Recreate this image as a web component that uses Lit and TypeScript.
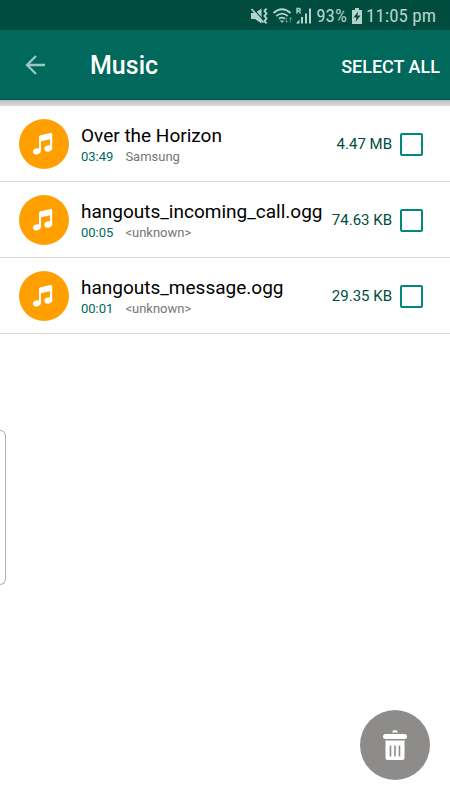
import { LitElement, html, css } from "lit";
import { customElement, property } from "lit/decorators.js";

interface Track {
  id: string;
  title: string;
  duration: string;
  artist: string;
  size: string;
}

const TRACKS: Track[] = [
  { id: "t1", title: "Over the Horizon", duration: "03:49", artist: "Samsung", size: "4.47 MB" },
  { id: "t2", title: "hangouts_incoming_call.ogg", duration: "00:05", artist: "<unknown>", size: "74.63 KB" },
  { id: "t3", title: "hangouts_message.ogg", duration: "00:01", artist: "<unknown>", size: "29.35 KB" },
];

@customElement("status-bar")
class StatusBar extends LitElement {
  static styles = css`
    :host {
      display: flex;
      align-items: center;
      justify-content: flex-end;
      height: 30px;
      padding: 2px 14px 0 0;
      box-sizing: border-box;
      background: #004d40;
      color: #b5d3cc;
      font: 19px/20px "Roboto Condensed", Roboto, sans-serif;
      white-space: nowrap;
    }
    svg {
      display: block;
      flex: none;
    }
    .level {
      margin: 0 5px 0 2px;
    }
    .time {
      margin-left: 4px;
    }
  `;

  render() {
    return html`
      <svg width="66" height="20" viewBox="0 0 66 20" fill="none" stroke="#b5d3cc">
        <path d="M3 7h4l6.500-4.500v15L7 13H3z" fill="#b5d3cc" stroke="none" />
        <path d="M5 2.500l11 12.500" stroke="#004d40" stroke-width="1.200" />
        <path d="M3.500 3l12 13.500" stroke-width="1.700" />
        <path d="M18.500 2.500l-2 2.500 2 2.500-2 2.500 2 2.500-2 2.500 2 2.500" stroke-width="1.900" />
        <path d="M25.500 7q8.500-7.500 17 0M28.300 10q5.700-4.800 11.400 0M31 12.800q3-2.400 6 0" stroke-width="1.800" />
        <path d="M32 14.500h4l-2 2.500z" fill="#b5d3cc" stroke="none" />
        <path d="M38.500 11.500v5m-1.500-1.700l1.500 1.700 1.500-1.700M42.500 16.500v-5m-1.500 1.700l1.500-1.700 1.500 1.700" stroke="#4f8b80" />
        <path d="M49 7.500v-5h2a1.200 1.200 0 0 1 0 2.500h-2m2 0l1.500 2.500" stroke-width="1.400" />
        <path d="M54 17.500v-6.500M58 17.500V7.500M62 17.500V2.500" stroke-width="2" />
        <path d="M48 17.500l3.500-4v4z" fill="#b5d3cc" stroke="none" />
      </svg>
      <span class="level">93%</span>
      <svg width="10" height="16" viewBox="0 0 10 16">
        <path d="M3 0h4v2h3v14H0V2h3z" fill="#b5d3cc" />
        <path d="M6 3.500L1.500 9.500h3L3.500 14l5-6.500H5.500z" fill="#004d40" />
      </svg>
      <span class="time">11:05 pm</span>
    `;
  }
}

@customElement("track-row")
class TrackRow extends LitElement {
  @property({ attribute: false }) track!: Track;

  static styles = css`
    :host {
      display: flex;
      align-items: center;
      box-sizing: border-box;
      min-height: 76px;
      padding: 1px 27px 0 19px;
      border-bottom: 1px solid #d6d6d6;
    }
    .cover {
      display: grid;
      place-items: center;
      flex: none;
      width: 50px;
      height: 50px;
      border-radius: 50%;
      background: #ffa000;
    }
    .text {
      flex: 1;
      min-width: 0;
      margin-left: 12px;
    }
    .title {
      display: block;
      padding-top: 2px;
      font-size: 19px;
      line-height: 24px;
      color: #000;
      white-space: nowrap;
    }
    .meta {
      display: flex;
      gap: 12px;
      font-size: 13px;
      line-height: 18px;
      color: #757575;
    }
    .duration {
      color: #00695c;
    }
    .size {
      margin-right: 8px;
      font-size: 15px;
      color: #004d40;
      white-space: nowrap;
    }
    .pick {
      appearance: none;
      flex: none;
      box-sizing: border-box;
      width: 23px;
      height: 23px;
      margin: 0;
      border: 2px solid #00897b;
      border-radius: 2px;
      background: #fff;
    }
    .pick:checked {
      background: #00897b;
    }
  `;

  render() {
    const { id, title, duration, artist, size } = this.track;
    return html`
      <span class="cover">
        <svg width="24" height="24" viewBox="0 0 24 24" fill="#fff">
          <path d="M7 5.300Q7 3.700 8.500 3.300L18.500 .9Q20.200 .7 20.200 2.300V16.500h-2.200V7.300L9 9.300V19H7z" />
          <ellipse cx="4.900" cy="19.300" rx="4" ry="3" transform="rotate(-14 4.900 19.300)" />
          <ellipse cx="16.300" cy="16.500" rx="4" ry="3" transform="rotate(-14 16.300 16.500)" />
        </svg>
      </span>
      <div class="text">
        <label class="title" for=${id}>${title}</label>
        <div class="meta"><span class="duration">${duration}</span><span>${artist}</span></div>
      </div>
      <span class="size">${size}</span>
      <input class="pick" type="checkbox" id=${id} />
    `;
  }
}

@customElement("app-root")
class AppRoot extends LitElement {
  static styles = css`
    :host {
      display: block;
      position: relative;
      min-height: 100vh;
      background: #fff;
      font-family: Roboto, sans-serif;
    }
    button {
      padding: 0;
      border: 0;
      background: none;
      font: inherit;
      color: inherit;
      cursor: pointer;
    }
    svg {
      display: block;
    }
    .bar {
      display: flex;
      align-items: center;
      box-sizing: border-box;
      height: 70px;
      padding: 1px 10px 0 25px;
      border-bottom: 1px solid #00574b;
      background: #00695c;
      color: #fff;
    }
    .title {
      flex: 1;
      margin: 0 0 0 45px;
      padding-top: 2px;
      font-size: 25px;
      line-height: 32px;
      font-weight: 500;
    }
    .all {
      padding-top: 2px;
      font-size: 18px;
      font-weight: 500;
    }
    .shade {
      height: 6px;
      background: linear-gradient(#adc4c0 0 1px, #c4c4c4 1px, #dedede);
    }
    .edge {
      position: absolute;
      left: 0;
      top: 430px;
      box-sizing: border-box;
      width: 6px;
      height: 155px;
      border: 1px solid #b0b0b0;
      border-left: 0;
      border-radius: 0 6px 6px 0;
    }
    .delete {
      position: fixed;
      right: 20px;
      bottom: 20px;
      display: grid;
      place-items: center;
      width: 70px;
      height: 70px;
      border-radius: 50%;
      background: #8d8c8b;
    }
  `;

  render() {
    return html`
      <status-bar></status-bar>
      <header class="bar">
        <button aria-label="Back">
          <svg width="20" height="20" viewBox="0 0 20 20" fill="none" stroke="#99c9c1" stroke-width="2.300">
            <path d="M20 10H2M11 1l-9 9 9 9" />
          </svg>
        </button>
        <h1 class="title">Music</h1>
        <button class="all">SELECT ALL</button>
      </header>
      <div class="shade"></div>
      <main>${TRACKS.map((t) => html`<track-row .track=${t}></track-row>`)}</main>
      <div class="edge"></div>
      <button class="delete" aria-label="Delete">
        <svg width="24" height="31" viewBox="0 0 24 31" fill="#fff">
          <path d="M9 2.500Q9.300 0 12 0t3 2.500z" />
          <rect x="0" y="4" width="24" height="5" rx="2.500" />
          <path d="M2.500 10.500h19V28a2 2 0 0 1-2 2h-15a2 2 0 0 1-2-2z" />
          <path d="M7.500 15.500v11M12 15.500v11M16.500 15.500v11" stroke="#8d8c8b" stroke-width="1.600" />
        </svg>
      </button>
    `;
  }
}
